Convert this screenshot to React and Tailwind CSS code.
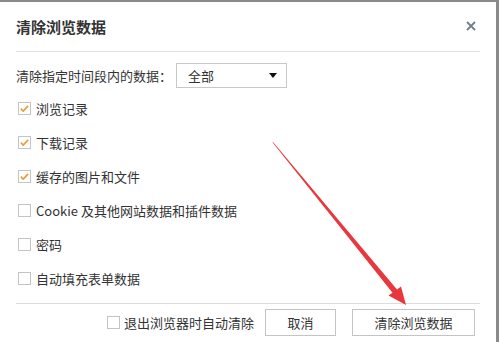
const rows = [
  { label: '浏览记录', checked: true },
  { label: '下载记录', checked: true },
  { label: '缓存的图片和文件', checked: true },
  { label: 'Cookie 及其他网站数据和插件数据', checked: false },
  { label: '密码', checked: false },
  { label: '自动填充表单数据', checked: false },
]

const Box = ({ checked }) => (
  <span className="w-[13px] h-[13px] border border-[#c4c4c4] bg-white flex items-center justify-center shrink-0">
    {checked && (
      <svg viewBox="0 0 12 12" className="w-[11px] h-[11px]">
        <path d="M2 6.2l2.6 2.6L10 3.2" fill="none" stroke="#ee9a3a" strokeWidth="1.8" strokeLinejoin="round" />
      </svg>
    )}
  </span>
)

export default function App() {
  return (
    <div
      className="relative w-[499px] h-[342px] bg-white border-t-2 border-r-[3px] border-[#8a8a8a] px-4 text-[13px] text-[#333]"
      style={{ fontFamily: '"Noto Sans CJK SC", "Liberation Sans", sans-serif' }}
    >
      <div className="h-[50px] flex items-center justify-between border-b border-[#e2e2e2]">
        <h1 className="text-[15px] font-bold leading-5 text-[#333]">清除浏览数据</h1>
        <svg viewBox="0 0 10 10" className="w-[10px] h-[10px] mr-1 mb-[2px]">
          <path d="M1 1l8 8M9 1L1 9" stroke="#6f7f8c" strokeWidth="1.8" />
        </svg>
      </div>

      <div className="mt-[11px] flex items-center h-[25px]">
        <span className="w-[160px] leading-none">清除指定时间段内的数据：</span>
        <div className="w-[111px] h-[25px] border border-[#c8c8c8] flex items-center justify-between pl-[11px] pr-[9px]">
          <span className="leading-none">全部</span>
          <svg viewBox="0 0 8 5" className="w-[8px] h-[5px]">
            <path d="M0 0h8L4 5z" fill="#111" />
          </svg>
        </div>
      </div>

      <div className="mt-[3px]">
        {rows.map((r) => (
          <div key={r.label} className="h-[34px] flex items-center gap-[5px] pl-[2px]">
            <Box checked={r.checked} />
            <span className="leading-none">{r.label}</span>
          </div>
        ))}
      </div>

      <div className="mt-[8px] border-t border-[#dcdcdc] pt-[5px] pr-[5px] flex items-center justify-end">
        <div className="flex items-center gap-[4px] mr-[11px]">
          <Box checked={false} />
          <span className="leading-none">退出浏览器时自动清除</span>
        </div>
        <button className="w-[71px] h-[27px] border border-[#c4c4c4] bg-white text-[13px] text-[#333] leading-none">取消</button>
        <button className="ml-[16px] w-[123px] h-[27px] border border-[#c4c4c4] bg-white text-[13px] text-[#333] leading-none">清除浏览数据</button>
      </div>

      <svg className="absolute left-0 top-[-2px] w-[499px] h-[342px] pointer-events-none" viewBox="0 0 499 342">
        <polygon
          points="273,142 397,289.5 401,286.5 406,305 388.5,295.5 392.5,292.8 272.6,142.6"
          fill="#e8383d"
        />
      </svg>
    </div>
  )
}
